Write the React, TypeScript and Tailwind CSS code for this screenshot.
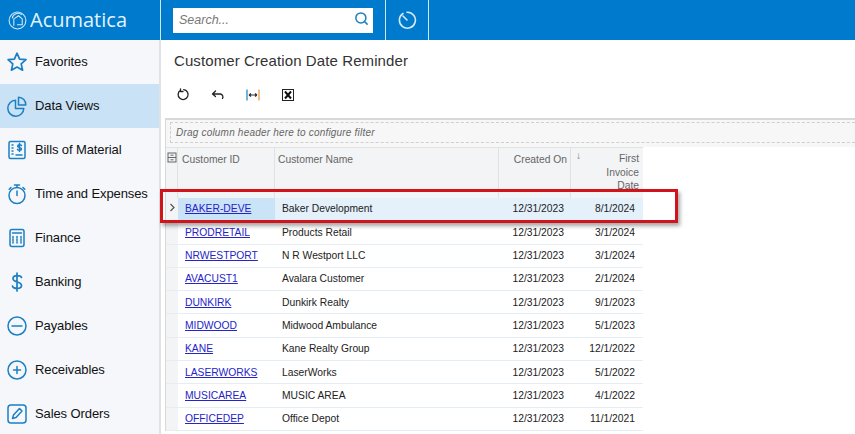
import { Search } from "lucide-react";
import type { ReactNode } from "react";

const blue = "#1b7fc4";

function NavIcon({ children }: { children: ReactNode }) {
  return (
    <svg width="22" height="22" viewBox="0 0 22 22" fill="none" stroke={blue} strokeWidth="1.500" strokeLinecap="round" strokeLinejoin="round">
      {children}
    </svg>
  );
}

const navItems: { label: string; active?: boolean; icon: ReactNode }[] = [
  { label: "Favorites", icon: <path d="M11 2.200l2.600 5.900 6.400.6-4.800 4.200 1.400 6.300L11 16l-5.600 3.200 1.400-6.300L2 8.700l6.400-.6z" strokeWidth="1.700" /> },
  {
    label: "Data Views",
    active: true,
    icon: (
      <>
        <path d="M9.500 5.200a8 8 0 1 0 8.300 8.300H9.500z" />
        <path d="M12.500 2.200a7.500 7.500 0 0 1 7.300 7.800h-7.300z" />
      </>
    ),
  },
  {
    label: "Bills of Material",
    icon: (
      <>
        <rect x="3" y="2.500" width="16" height="17" rx="1.500" />
        <path d="M6 6h1M6 9h1M6 12h1M6 15h1M10 16h6" />
        <path d="M15.500 6.500c-.5-1-3.500-1.400-3.900.3-.4 2 3.900 1.300 3.900 3.300 0 1.700-3.400 1.500-4 .3M13.500 4.500v8" />
      </>
    ),
  },
  {
    label: "Time and Expenses",
    icon: (
      <>
        <circle cx="11" cy="12.500" r="8" />
        <path d="M11 12.500V8M8.500 2h5M11 2v2.500M17 4.500l1.800 1.800M5 4.500L3.200 6.300" />
      </>
    ),
  },
  {
    label: "Finance",
    icon: (
      <>
        <rect x="4" y="2.500" width="14" height="17" rx="2" />
        <path d="M6.500 6h9" />
        <path d="M7 9.500v7M11 9.500v7M15 9.500v7" strokeDasharray="1.500 1" />
      </>
    ),
  },
  {
    label: "Banking",
    icon: <path d="M15.500 6.500c-.5-2.500-8.500-3-8.500 1 0 4.500 8.500 2.500 8.500 7 0 4-8.500 3.500-9 .5M11 2v18" strokeWidth="1.700" />,
  },
  {
    label: "Payables",
    icon: (
      <>
        <circle cx="11" cy="11" r="9" />
        <path d="M6 11h10" />
      </>
    ),
  },
  {
    label: "Receivables",
    icon: (
      <>
        <circle cx="11" cy="11" r="9" />
        <path d="M7.500 11h7M11 7.500v7" />
      </>
    ),
  },
  {
    label: "Sales Orders",
    icon: (
      <>
        <rect x="2" y="2" width="18" height="18" rx="3" />
        <path d="M6.500 15.500l1-3.500 6-6.500 2.500 2.500-6 6.500z" />
      </>
    ),
  },
];

const rows = [
  ["BAKER-DEVE", "Baker Development", "12/31/2023", "8/1/2024"],
  ["PRODRETAIL", "Products Retail", "12/31/2023", "3/1/2024"],
  ["NRWESTPORT", "N R Westport LLC", "12/31/2023", "3/1/2024"],
  ["AVACUST1", "Avalara Customer", "12/31/2023", "2/1/2024"],
  ["DUNKIRK", "Dunkirk Realty", "12/31/2023", "9/1/2023"],
  ["MIDWOOD", "Midwood Ambulance", "12/31/2023", "5/1/2023"],
  ["KANE", "Kane Realty Group", "12/31/2023", "12/1/2022"],
  ["LASERWORKS", "LaserWorks", "12/31/2023", "5/1/2022"],
  ["MUSICAREA", "MUSIC AREA", "12/31/2023", "4/1/2022"],
  ["OFFICEDEP", "Office Depot", "12/31/2023", "11/1/2021"],
];

function ToolIcon({ children }: { children: ReactNode }) {
  return (
    <svg width="14" height="14" viewBox="0 0 14 14" fill="none" stroke="#222" strokeWidth="1.300" strokeLinecap="round" strokeLinejoin="round">
      {children}
    </svg>
  );
}

export default function App() {
  return (
    <div className="relative flex h-[434px] w-[855px] flex-col overflow-hidden bg-white font-['Liberation_Sans',Arial,sans-serif]">
      <header className="flex h-10 shrink-0 bg-[#007acc]">
        <div className="flex w-[160px] items-center gap-[3px] pl-2 text-white">
          <svg width="19" height="21" viewBox="0 0 18 20" fill="none" stroke="#d5ebf8" strokeWidth="1">
            <circle cx="9" cy="10" r="8" />
            <path d="M4 8a5.500 5.500 0 0 1 9-3.500M5.500 15V8.500L10 5.500l3.500 3v5.500h-5" />
          </svg>
          <span className="text-[20px] leading-none font-['Open_Sans',sans-serif] text-[#e4f3fc]">Acumatica</span>
        </div>
        <div className="flex w-[226px] items-center border-l border-r border-[#cfe6f5] pl-3">
          <div className="flex h-[25px] w-[200px] items-center justify-between bg-white pl-[6px] pr-[4px]">
            <span className="text-[12.500px] italic text-[#777]">Search...</span>
            <Search size={15} strokeWidth={2.400} className="mb-1 text-[#1b7fc4]" />
          </div>
        </div>
        <div className="flex w-[43px] items-center justify-center border-r border-[#cfe6f5]">
          <svg width="20" height="20" viewBox="0 0 20 20" fill="none" stroke="#d5ebf8" strokeWidth="1.600" strokeLinecap="round">
            <path d="M6 3.500a8 8 0 1 0 4-1.300" />
            <path d="M6 6l4 4" />
          </svg>
        </div>
      </header>

      <div className="flex min-h-0 flex-1">
        <nav className="w-[161px] shrink-0 border-r-2 border-[#dfe3e6] bg-[#f5f7fb]">
          {navItems.map((item) => (
            <div key={item.label} className={`flex h-11 items-center gap-[7px] pl-[6px] text-[13px] tracking-[-0.1px] text-[#111] ${item.active ? "bg-[#c9e2f5]" : ""}`}>
              <NavIcon>{item.icon}</NavIcon>
              <span className="whitespace-nowrap">{item.label}</span>
            </div>
          ))}
        </nav>

        <main className="min-w-0 flex-1">
          <h1 className="pl-[13px] pt-[12px] text-[15px] leading-[18px] tracking-[0.1px] text-[#333]">Customer Creation Date Reminder</h1>
          <div className="flex h-[31px] items-center gap-[21px] pl-[15px] pt-[18px]">
            <ToolIcon>
              <path d="M4.500 2.300a5 5 0 1 0 3.200-.7M4.500 1v2.500H7" />
            </ToolIcon>
            <ToolIcon>
              <path d="M1.500 6h8a3 3 0 0 1 2 4.500M1.500 6l3-3M1.500 6l3 2.500" />
            </ToolIcon>
            <svg width="14" height="14" viewBox="0 0 14 14" fill="none" strokeWidth="1.200">
              <path d="M1 1.500v11" stroke="#1b7fc4" />
              <path d="M13 1.500v11" stroke="#e8963c" />
              <path d="M3 7h8M3 7l2-1.500M3 7l2 1.500M11 7L9 5.500M11 7L9 8.500" stroke="#333" />
            </svg>
            <svg width="14" height="14" viewBox="0 0 14 14" fill="none">
              <rect x="1.500" y="1.500" width="11" height="11" stroke="#222" />
              <path d="M4 3.500l6 7M10 3.500l-6 7" stroke="#111" strokeWidth="2" />
            </svg>
          </div>

          <section className="ml-[4px] mt-[17px] border-l border-t-2 border-[#d8d8d8]">
            <div className="bg-[#f7f7f7] pb-[4px] pl-[4px] pt-[2px]">
              <div className="flex h-[21px] items-center border-y border-l border-dashed border-[#cfcfcf] pl-[5px] text-[10px] italic tracking-[0.2px] text-[#666]">
                Drag column header here to configure filter
              </div>
            </div>
            <div className="grid grid-cols-[12px_97px_224px_72px_72px] text-[10.300px]">
              <div className="flex h-[51px] justify-center border-r border-t border-[#e2e2e2] bg-[#f3f4f5] pt-[4px]">
                <svg width="10" height="11" viewBox="0 0 10 11" fill="none" stroke="#666">
                  <rect x="1" y="1" width="8" height="9" />
                  <path d="M1 5.500h8M3.500 3.200h3M3.500 7.800h3" />
                </svg>
              </div>
              <div className="h-[51px] border-r border-t border-[#e2e2e2] bg-[#f3f4f5] pl-[4px] pt-[4px] text-[#666]">Customer ID</div>
              <div className="h-[51px] border-r border-t border-[#e2e2e2] bg-[#f3f4f5] pl-[3px] pt-[4px] text-[#666]">Customer Name</div>
              <div className="h-[51px] border-r border-t border-[#e2e2e2] bg-[#f3f4f5] pr-[3px] pt-[4px] text-right text-[#666]">Created On</div>
              <div className="relative h-[51px] border-t border-[#e2e2e2] bg-[#f3f4f5] pr-[4px] pt-[4px] text-right leading-[13.500px] text-[#666]">
                <span className="absolute left-[5px] top-[1px] text-[10px] text-[#777]">↓</span>
                First
                <br />
                Invoice
                <br />
                Date
              </div>

              {rows.map((r, i) => (
                <div key={r[0]} className="contents">
                  <div className="flex h-[23.300px] items-center justify-center border-b border-[#e6eef5] bg-[#f3f4f5] text-[#555]">
                    {i === 0 && (
                      <svg width="7" height="9" viewBox="0 0 7 9" fill="none" stroke="#555" strokeWidth="1.200" className="mb-1">
                        <path d="M1.500 1l3.500 3.500L1.500 8" />
                      </svg>
                    )}
                  </div>
                  <div className={`flex h-[23.300px] items-center border-b border-[#e6eef5] pl-[7px] ${i === 0 ? "bg-[#cbe3f6]" : ""}`}>
                    <a href="#" className="text-[#2424c8] underline">{r[0]}</a>
                  </div>
                  <div className={`flex h-[23.300px] items-center border-b border-[#e6eef5] pl-[7px] text-[#222] ${i === 0 ? "bg-[#e4f1fa]" : ""}`}>{r[1]}</div>
                  <div className={`flex h-[23.300px] items-center justify-end border-b border-[#e6eef5] pr-[7px] text-[#222] ${i === 0 ? "bg-[#e4f1fa]" : ""}`}>{r[2]}</div>
                  <div className={`flex h-[23.300px] items-center justify-end border-b border-[#e6eef5] pr-[8px] text-[#222] ${i === 0 ? "bg-[#e4f1fa]" : ""}`}>{r[3]}</div>
                </div>
              ))}
            </div>
          </section>
        </main>
      </div>

      <div className="absolute left-[160px] top-[189px] h-[34px] w-[518px] border-[3px] border-[#d0141c] shadow-[2px_3px_4px_rgba(0,0,0,0.35)]" />
    </div>
  );
}
